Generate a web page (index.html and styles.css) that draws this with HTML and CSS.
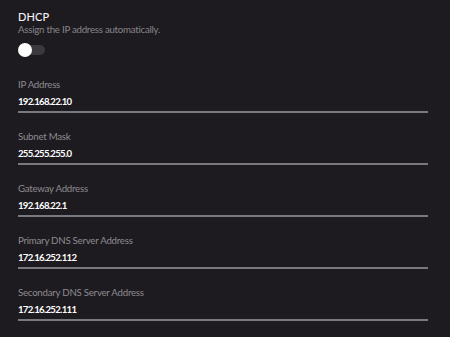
FILE: index.html
```html
<!DOCTYPE html>
<html lang="en">
<head>
    <meta charset="UTF-8">
    <meta name="viewport" content="width=device-width, initial-scale=1.0">
    <title>Network Settings</title>
    <link rel="stylesheet" href="styles.css">
</head>
<body>
    <div class="settings">
        <div class="dhcp">
            <div class="dhcp-title">DHCP</div>
            <div class="dhcp-desc">Assign the IP address automatically.</div>
            <div class="toggle">
                <span class="toggle-knob"></span>
            </div>
        </div>

        <div class="field">
            <div class="field-label">IP Address</div>
            <div class="field-value">192.168.22.10</div>
        </div>
        <div class="field">
            <div class="field-label">Subnet Mask</div>
            <div class="field-value">255.255.255.0</div>
        </div>
        <div class="field">
            <div class="field-label">Gateway Address</div>
            <div class="field-value">192.168.22.1</div>
        </div>
        <div class="field">
            <div class="field-label">Primary DNS Server Address</div>
            <div class="field-value">172.16.252.112</div>
        </div>
        <div class="field">
            <div class="field-label">Secondary DNS Server Address</div>
            <div class="field-value">172.16.252.111</div>
        </div>
    </div>
</body>
</html>
```

FILE: styles.css
```css
/* General Styles */
body {
    margin: 0;
    padding: 0;
    background: #1e1b20;
    color: #fff;
    font-family: Lato, "Liberation Sans", sans-serif;
    overflow: hidden;
}

.settings {
    padding: 10px 22px 0 18px;
}

/* DHCP block */
.dhcp-title {
    font-size: 11px;
    line-height: 13px;
    font-weight: 500;
    letter-spacing: 0.1px;
    color: #f4f4f4;
}

.dhcp-desc {
    font-size: 9.7px;
    line-height: 13px;
    letter-spacing: -0.25px;
    color: #87858a;
}

.toggle {
    position: relative;
    width: 26px;
    height: 10px;
    margin: 9px 0 0 1px;
    border-radius: 5px;
    background: #3b393d;
}

.toggle-knob {
    position: absolute;
    left: -1px;
    top: -2px;
    width: 14px;
    height: 14px;
    border-radius: 50%;
    background: #fff;
}

/* Address fields */
.field {
    margin-top: 22px;
    padding-bottom: 2px;
    border-bottom: 2px solid #79787c;
}

.field + .field {
    margin-top: 16px;
}

.field-label {
    font-size: 9.7px;
    line-height: 14px;
    letter-spacing: -0.25px;
    color: #8d8b90;
}

.field-value {
    margin-top: 4px;
    font-size: 9.6px;
    line-height: 14px;
    font-weight: bold;
    letter-spacing: -0.7px;
    color: #fff;
}
```
